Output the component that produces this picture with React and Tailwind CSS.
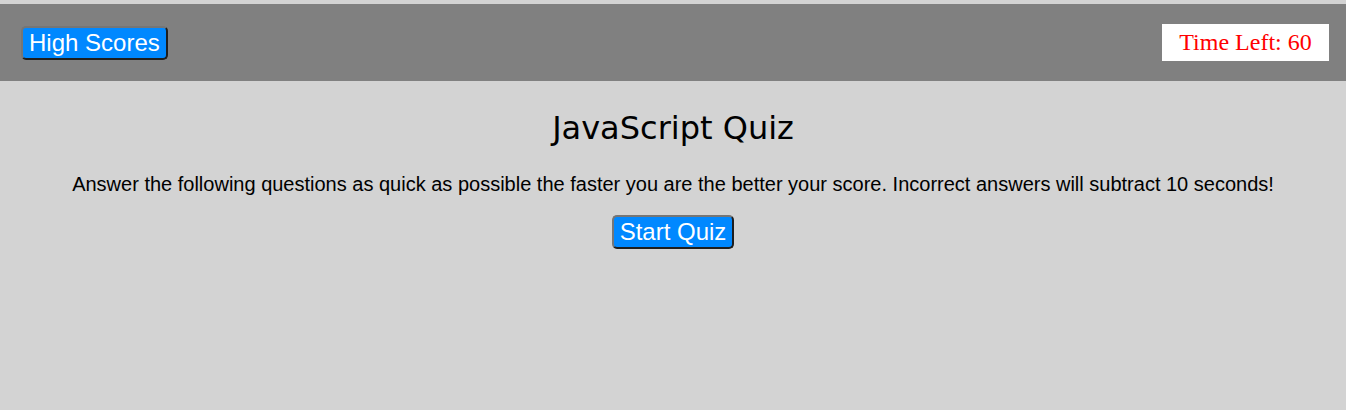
import React from 'react';

export default function App() {
  const btn =
    "bg-[#0088ff] text-white text-[24px] leading-[28px] px-[6px] py-[1px] rounded-[5px] border-2 border-t-[#767676] border-l-[#767676] border-r-[#1e1e1e] border-b-[#1e1e1e] font-['Liberation_Sans',Arial,sans-serif]";

  return (
    <div className="min-h-[410px] bg-[#d3d3d3] pt-[4px]">
      <header className="h-[77px] bg-[#808080] flex items-center justify-between pl-[21px] pr-[17px]">
        <button className={btn}>High Scores</button>
        <div className="bg-white text-[#ff0000] text-[24px] leading-[37px] w-[167px] text-center font-['Liberation_Serif','Times_New_Roman',serif]">
          Time Left: 60
        </div>
      </header>
      <main className="flex flex-col items-center text-black">
        <h1 className="mt-[27px] text-[32px] leading-[40px] font-['DejaVu_Sans',sans-serif]">JavaScript Quiz</h1>
        <p className="mt-[25px] text-[20px] leading-[22px] font-['Liberation_Sans',Arial,sans-serif]">
          Answer the following questions as quick as possible the faster you are the better your score. Incorrect answers will subtract 10 seconds!
        </p>
        <button className={btn + " mt-[20px]"}>Start Quiz</button>
      </main>
    </div>
  );
}
